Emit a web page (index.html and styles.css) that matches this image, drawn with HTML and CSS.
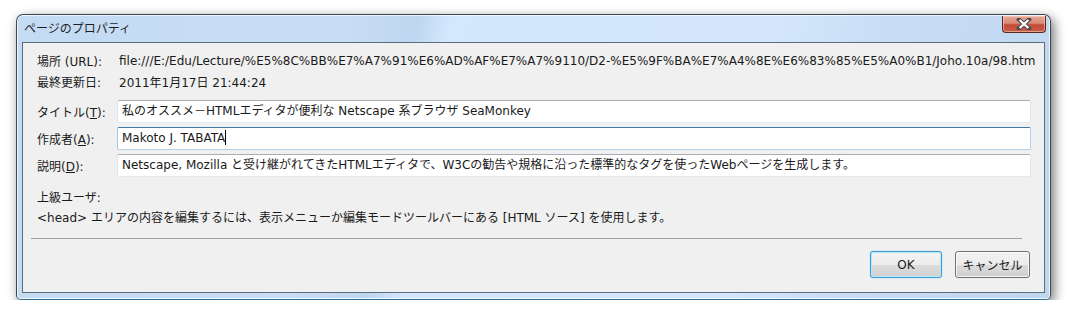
FILE: index.html
```html
<!DOCTYPE html>
<html lang="ja">
<head>
    <meta charset="UTF-8">
    <title>ページのプロパティ</title>
    <link rel="stylesheet" href="styles.css">
</head>
<body>
    <div class="window">
        <div class="titlebar">
            <span class="title">ページのプロパティ</span>
            <div class="close">
                <svg width="18" height="12" viewBox="0 0 18 12">
                    <path d="M4 1.5 L14 10.5 M14 1.5 L4 10.5" stroke="#4a4a52" stroke-width="4.2" stroke-linecap="square"/>
                    <path d="M4.6 2 L13.4 10 M13.4 2 L4.6 10" stroke="#fff" stroke-width="2.2"/>
                </svg>
            </div>
        </div>
        <div class="client">
            <div class="info">
                <span class="label">場所 (URL):</span>
                <span class="value">file:///E:/Edu/Lecture/%E5%8C%BB%E7%A7%91%E6%AD%AF%E7%A7%9110/D2-%E5%9F%BA%E7%A4%8E%E6%83%85%E5%A0%B1/Joho.10a/98.htm</span>
                <span class="label">最終更新日:</span>
                <span class="value">2011年1月17日 21:44:24</span>
            </div>

            <div class="fields">
                <label class="label">タイトル(<u>T</u>):</label>
                <div class="field">私のオススメ－HTMLエディタが便利な Netscape 系ブラウザ SeaMonkey</div>
                <label class="label">作成者(<u>A</u>):</label>
                <div class="field focused">Makoto J. TABATA<span class="caret"></span></div>
                <label class="label">説明(<u>D</u>):</label>
                <div class="field">Netscape, Mozilla と受け継がれてきたHTMLエディタで、W3Cの勧告や規格に沿った標準的なタグを使ったWebページを生成します。</div>
            </div>

            <div class="advanced">
                <p>上級ユーザ:</p>
                <p>&lt;head&gt; エリアの内容を編集するには、表示メニューか編集モードツールバーにある [HTML ソース] を使用します。</p>
            </div>

            <hr class="sep">

            <div class="buttons">
                <button class="btn default">OK</button>
                <button class="btn">キャンセル</button>
            </div>
        </div>
    </div>
</body>
</html>
```

FILE: styles.css
```css
* {
    box-sizing: border-box;
}
body {
    margin: 0;
    background: #ffffff;
    font-family: "DejaVu Sans", "Noto Sans CJK JP", sans-serif;
    font-size: 12px;
    color: #1a1a1a;
}
.window {
    margin: 14px 0 0 16px;
    width: 1035px;
    height: 286px;
    border: 1px solid #3b4654;
    border-bottom-color: #2f6f98;
    border-radius: 7px 7px 5px 5px;
    background: linear-gradient(100deg, #c3dbf3 0%, #c8def5 30%, #bed6ef 37%, #d3e7fd 40%, #d3e6fc 70%, #c9def5 80%, #bfd6ef 100%);
    box-shadow: 3px 4px 12px rgba(0, 0, 0, 0.55), inset 0 0 0 1px rgba(255, 255, 255, 0.75);
    padding: 0 5px 6px 5px;
    display: flex;
    flex-direction: column;
}
.titlebar {
    height: 27px;
    display: flex;
    justify-content: space-between;
    align-items: flex-start;
}
.title {
    margin: 4px 0 0 2px;
    font-family: "Noto Sans CJK JP", sans-serif;
    font-size: 12px;
    color: #1e1e1e;
}
.close {
    width: 44px;
    height: 17px;
    margin-top: 1px;
    margin-right: -1px;
    border: 1px solid #5a2a22;
    border-top: none;
    border-radius: 0 0 4px 4px;
    background: linear-gradient(#e6a796 0%, #d98a76 45%, #c44a35 55%, #c85c46 100%);
    box-shadow: inset 0 0 0 1px rgba(255, 220, 210, 0.5);
    display: flex;
    justify-content: center;
    align-items: center;
}
.client {
    flex: 1;
    border: 1px solid #5e6d7c;
    background: #f0f0f0;
    padding: 7px 13px 0 14px;
}
.info {
    display: grid;
    grid-template-columns: 80px 1fr;
    grid-auto-rows: 21px;
    align-items: center;
}
.info .value {
    padding-left: 2px;
    white-space: nowrap;
}
.label u {
    text-decoration: underline;
}
.fields {
    margin-top: 8px;
    display: grid;
    grid-template-columns: 80px 1fr;
    row-gap: 4px;
    align-items: center;
}
.field {
    height: 23px;
    line-height: 21px;
    background: #ffffff;
    border: 1px solid #e2e3ea;
    border-top-color: #abadb3;
    border-bottom-color: #e3e9ef;
    border-radius: 2px;
    padding: 0 4px;
    white-space: nowrap;
}
.field.focused {
    border-color: #b5cfe7;
    border-top-color: #3d7bad;
    border-left-color: #a4c9e3;
}
.caret {
    display: inline-block;
    width: 1px;
    height: 15px;
    background: #000;
    vertical-align: -3px;
}
.advanced {
    margin-top: 11px;
}
.advanced p {
    margin: 0;
    line-height: 20px;
}
.sep {
    margin: 10px 9px 0 -6px;
    border: none;
    border-top: 1px solid #a0a0a0;
    height: 0;
}
.buttons {
    margin-top: 12px;
    display: flex;
    justify-content: flex-end;
    gap: 13px;
    padding-right: 1px;
}
.btn {
    height: 27px;
    font-family: inherit;
    font-size: 12px;
    color: #1a1a1a;
    border: 1px solid #707070;
    border-radius: 3px;
    background: linear-gradient(#f2f2f2 0%, #ebebeb 50%, #dddddd 51%, #cfcfcf 100%);
    box-shadow: inset 0 0 0 1px rgba(255, 255, 255, 0.8);
    padding: 0;
    width: 75px;
}
.btn.default {
    width: 72px;
    border-color: #3c9fd8;
    background: linear-gradient(#f4f4f4 0%, #ececec 50%, #dcdcdc 51%, #d2d2d2 100%);
    box-shadow: inset 0 0 0 1px #b8e6fb, 0 0 1px #3c9fd8;
}
```
